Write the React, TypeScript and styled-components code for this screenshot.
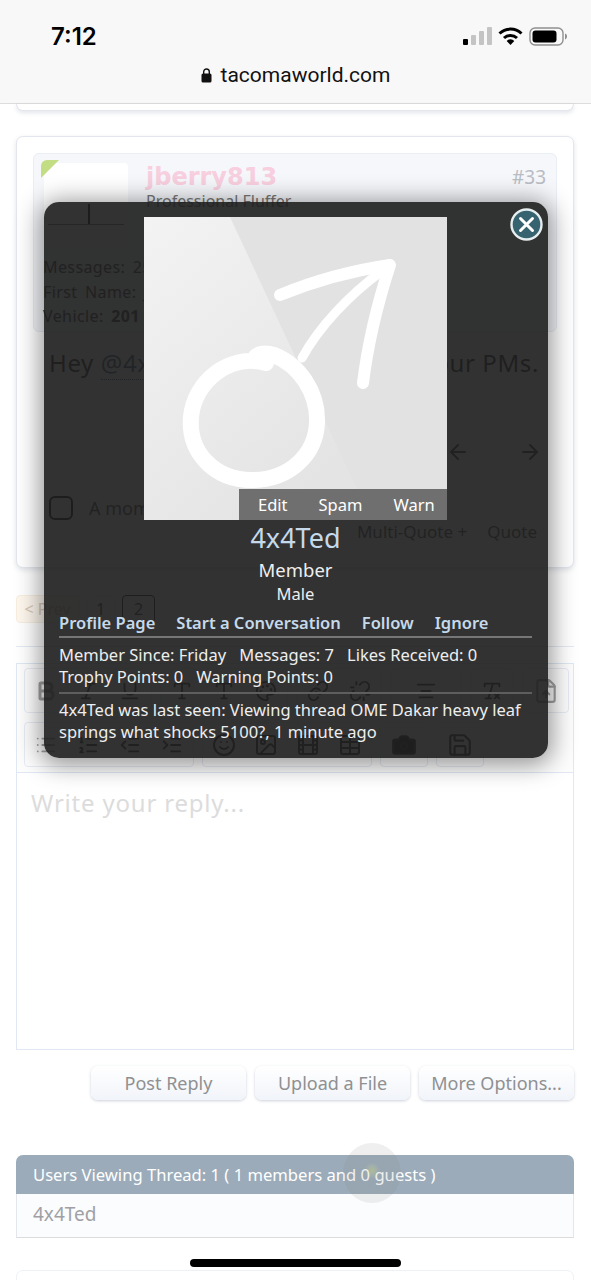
import React from 'react'
import styled, { createGlobalStyle } from 'styled-components'
import {
  AlignCenter, Bold, Camera, Film, FileUp, Image, Indent, Italic, Link, List, ListOrdered,
  Outdent, Palette, RemoveFormatting, Save, Smile, Table, Type, Underline, Unlink, ArrowLeft, ArrowRight
} from 'lucide-react'

const GlobalStyle = createGlobalStyle`
  html, body { margin: 0; padding: 0; background: #fff; }
  body { font-family: "Noto Sans", "Open Sans", sans-serif; }
  * { box-sizing: border-box; }
`

const Page = styled.div`
  position: relative;
  width: 591px;
  height: 1280px;
  overflow: hidden;
  background: #fff;
`

const BrowserBar = styled.header`
  height: 104px;
  background: #f8f8f8;
  border-bottom: 1px solid #dcdcdc;
  display: flex;
  flex-direction: column;
  padding: 21px 24px 0 51px;
`

const StatusRow = styled.div`
  display: flex;
  justify-content: space-between;
  align-items: center;
  height: 30px;
  color: #000;
`

const Clock = styled.span`
  font-family: Inter, Roboto, sans-serif;
  font-size: 24px;
  font-weight: 600;
`

const StatusIcons = styled.div`
  display: flex;
  align-items: center;
  gap: 6px;
`

const UrlRow = styled.div`
  display: flex;
  justify-content: center;
  align-items: center;
  gap: 9px;
  margin: 8px -24px 0 -51px;
  height: 32px;
  font-family: Roboto, Inter, sans-serif;
  font-size: 21px;
  color: #111;
`

const Content = styled.main`
  padding: 0 17px 0 16px;
`

const CardTail = styled.div`
  height: 7px;
  background: #fff;
  border: 1px solid #e4e6ee;
  border-top: 0;
  border-radius: 0 0 8px 8px;
  box-shadow: 0 2px 4px rgba(90, 100, 130, 0.16);
  margin-bottom: 25px;
`

const PostCard = styled.article`
  height: 432px;
  padding: 16px 16px 0 16px;
  background: #fff;
  border: 1px solid #e3e6ee;
  border-radius: 7px;
  box-shadow: 0 2px 5px rgba(90, 100, 130, 0.18);
  display: flex;
  flex-direction: column;
`

const UserBox = styled.section`
  height: 179px;
  padding: 9px 10px 9px 10px;
  background: #f5f7fb;
  border: 1px solid #e9edf5;
  border-radius: 6px;
  flex: none;
`

const UserTop = styled.div`
  display: flex;
  gap: 18px;
`

const Avatar = styled.div`
  position: relative;
  width: 84px;
  height: 84px;
  background: #fff;
  border-radius: 4px;
  flex: none;
  display: flex;
  flex-direction: column;
  align-items: center;
  justify-content: flex-end;
`

const Ribbon = styled.span`
  position: absolute;
  left: -3px;
  top: -3px;
  width: 0;
  height: 0;
  border-top: 18px solid #c3dd84;
  border-right: 18px solid transparent;
  border-top-left-radius: 6px;
`

const AvatarStub = styled.span`
  width: 2px;
  height: 20px;
  margin-left: 6px;
  background: #111;
`

const AvatarRule = styled.span`
  width: 76px;
  height: 1px;
  margin-bottom: 22px;
  background: #777;
`

const UserMeta = styled.div`
  flex: 1;
  display: flex;
  flex-direction: column;
`

const NameRow = styled.div`
  display: flex;
  justify-content: space-between;
  align-items: center;
  height: 28px;
`

const UserName = styled.span`
  font-family: "DejaVu Sans", sans-serif;
  font-size: 24px;
  font-weight: 700;
  color: #f8cfde;
`

const PostNumber = styled.span`
  font-size: 19px;
  color: #b9bdc4;
`

const UserTitle = styled.span`
  font-size: 16px;
  line-height: 20px;
  color: #777;
`

const StatLine = styled.div`
  font-size: 16px;
  line-height: 24.5px;
  letter-spacing: 0.4px;
  word-spacing: 3px;
  color: #444;
  b { font-weight: 700; }
`

const StatList = styled.div`
  margin-top: 8px;
  margin-left: -1px;
`

const MessageText = styled.div`
  display: flex;
  justify-content: space-between;
  padding: 14px 18px 0 16px;
  font-size: 24px;
  letter-spacing: 0.6px;
  line-height: 34px;
  color: #333;
`

const Mention = styled.span`
  color: #49667c;
  border-bottom: 1px dotted #49667c;
`

const PostArrows = styled.div`
  display: flex;
  justify-content: flex-end;
  gap: 48px;
  padding: 60px 15px 0 0;
  color: #444;
`

const CheckRow = styled.div`
  display: flex;
  align-items: center;
  gap: 16px;
  margin: 32px 0 0 16px;
  font-size: 18px;
  color: #555;
`

const CheckBox = styled.span`
  width: 24px;
  height: 24px;
  border: 2px solid #1e1e1e;
  border-radius: 6px;
`

const QuoteRow = styled.div`
  display: flex;
  justify-content: flex-end;
  gap: 20px;
  padding-right: 20px;
  font-size: 17px;
  color: #555;
`

const Pager = styled.nav`
  display: flex;
  gap: 7px;
  margin-top: 27px;
  height: 28px;
`

const PageLink = styled.span<{ $tone?: 'prev' | 'current'; $w: number }>`
  display: flex;
  align-items: center;
  justify-content: center;
  width: ${p => p.$w}px;
  border-radius: 4px;
  font-size: 16px;
  color: ${p => (p.$tone === 'prev' ? '#d8c8b5' : '#444')};
  background: ${p => (p.$tone === 'prev' ? '#fdf7ee' : '#fff')};
  border: 1px solid ${p => (p.$tone === 'current' ? '#222' : p.$tone === 'prev' ? '#f7eedf' : '#f0f0f0')};
`

const Divider = styled.hr`
  margin: 23px 0 16px;
  border: 0;
  border-top: 1px solid #e3eaf3;
`

const Editor = styled.section`
  height: 387px;
  border: 1px solid #dfe8f3;
  display: flex;
  flex-direction: column;
`

const Toolbar = styled.div`
  height: 109px;
  padding: 4px 7px 0;
  display: flex;
  flex-direction: column;
  gap: 9px;
  border-bottom: 1px solid #dfe8f3;
  background: #fdfdfe;
`

const ToolRow = styled.div`
  display: flex;
  gap: 8px;
`

const ToolGroup = styled.div`
  display: flex;
  height: 45px;
  border: 1px solid #e6ebf3;
  border-radius: 4px;
`

const ToolButton = styled.span<{ $w?: number; $light?: boolean }>`
  width: ${p => p.$w ?? 42}px;
  display: flex;
  align-items: center;
  justify-content: center;
  color: ${p => (p.$light ? '#a2a2a2' : '#3c3c3c')};
`

const ReplyArea = styled.div`
  flex: 1;
  padding: 13px 14px;
  font-size: 24px;
  letter-spacing: 0.8px;
  color: #dcdcdc;
`

const ButtonRow = styled.div`
  display: flex;
  justify-content: flex-end;
  gap: 9px;
  margin-top: 16px;
`

const ActionButton = styled.span`
  width: 155px;
  height: 34px;
  display: flex;
  align-items: center;
  justify-content: center;
  font-size: 18px;
  color: #8f9092;
  border-radius: 7px;
  background: linear-gradient(#fff, #f1f4fa);
  box-shadow: 0 1px 3px rgba(90, 100, 130, 0.3);
`

const ViewersBox = styled.section`
  margin-top: 55px;
  height: 83px;
  border: 1px solid #e3e6ea;
  border-top: 0;
  border-bottom-color: #dcdcdc;
  border-radius: 7px 7px 0 0;
`

const ViewersHead = styled.div`
  height: 39px;
  margin: 0 -1px;
  padding: 0 17px;
  display: flex;
  align-items: center;
  font-size: 16.6px;
  color: #fff;
  background: #9babb9;
  border-radius: 7px 7px 0 0;
`

const ViewersBody = styled.div`
  height: 43px;
  padding: 0 16px 4px;
  display: flex;
  align-items: center;
  font-size: 19px;
  color: #a0a0a4;
  background: #fbfcfe;
`

const NextCard = styled.div`
  margin-top: 32px;
  height: 40px;
  border: 1px solid #eef1f6;
  border-radius: 7px;
`

const TouchRing = styled.span`
  position: absolute;
  left: 343px;
  top: 1143px;
  width: 58px;
  height: 60px;
  border-radius: 50%;
  background: radial-gradient(circle at 50% 46%, rgba(190, 200, 120, 0.5) 0, rgba(190, 200, 120, 0.25) 4px, rgba(130, 130, 130, 0.13) 8px);
`

const HomeBar = styled.span`
  position: absolute;
  left: 190px;
  top: 1259px;
  width: 211px;
  height: 8px;
  border-radius: 4px;
  background: #000;
`

const Overlay = styled.aside`
  position: absolute;
  left: 44px;
  top: 202px;
  width: 504px;
  height: 556px;
  padding: 15px 16px 0 15px;
  border-radius: 15px;
  background: rgba(30, 30, 30, 0.91);
  box-shadow: 0 3px 24px 4px rgba(0, 0, 0, 0.42);
  color: #eee;
  display: flex;
  flex-direction: column;
  align-items: stretch;
`

const CloseButton = styled.span`
  position: absolute;
  right: 5px;
  top: 6px;
  width: 33px;
  height: 33px;
`

const PhotoFrame = styled.div`
  position: relative;
  align-self: center;
  width: 303px;
  height: 303px;
  flex: none;
  svg { display: block; }
`

const PhotoActions = styled.div`
  position: absolute;
  right: 0;
  bottom: 0;
  width: 208px;
  height: 31px;
  padding-left: 19px;
  display: flex;
  gap: 31px;
  align-items: center;
  background: #6f6f6f;
  font-size: 16.5px;
  color: #fff;
`

const ProfileName = styled.div`
  margin-top: 1px;
  text-align: center;
  font-size: 27px;
  line-height: 34px;
  color: #c6d9ea;
`

const ProfileRank = styled.div`
  text-align: center;
  font-size: 18.5px;
  line-height: 30px;
`

const ProfileGender = styled.div`
  text-align: center;
  font-size: 16.5px;
  line-height: 17px;
`

const ProfileLinks = styled.div`
  display: flex;
  gap: 21px;
  margin: 8px 0 6px;
  height: 28px;
  padding-bottom: 2px;
  align-items: center;
  border-bottom: 2px solid #767676;
  font-size: 16.5px;
  font-weight: 600;
  color: #c6d9ea;
`

const ProfileStats = styled.div`
  display: flex;
  flex-wrap: wrap;
  column-gap: 13px;
  font-size: 16.5px;
  line-height: 22px;
  padding-bottom: 4px;
  border-bottom: 2px solid #5e5e5e;
  margin-bottom: 5px;
`

const LastSeen = styled.div`
  font-size: 16.5px;
  line-height: 22px;
`

const StatBreak = styled.span`
  flex-basis: 100%;
  height: 0;
`

function SignalIcon() {
  return (
    <svg width="29" height="18" viewBox="0 0 29 18">
      <rect x="0" y="12" width="5" height="6" rx="1" fill="#000" />
      <rect x="8" y="8" width="5" height="10" rx="1" fill="#c4c4c4" />
      <rect x="16" y="4" width="5" height="14" rx="1" fill="#c4c4c4" />
      <rect x="24" y="0" width="5" height="18" rx="1" fill="#c4c4c4" />
    </svg>
  )
}

function WifiIcon() {
  return (
    <svg width="25" height="18" viewBox="0 0 25 18" fill="none" stroke="#000" strokeWidth="3">
      <path d="M1.5 6.5a16 16 0 0 1 22 0" />
      <path d="M6 11a9.5 9.5 0 0 1 13 0" />
      <path d="M12.5 18l-3.8-4a5 5 0 0 1 7.6 0z" fill="#000" stroke="none" />
    </svg>
  )
}

function BatteryIcon() {
  return (
    <svg width="38" height="19" viewBox="0 0 38 19">
      <rect x="1" y="1" width="33" height="17" rx="5" fill="none" stroke="#8f8f8f" strokeWidth="1.4" />
      <rect x="3.5" y="3.5" width="24" height="12" rx="3" fill="#000" />
      <path d="M36 6.5c1.3.4 2 1.6 2 3s-.7 2.6-2 3z" fill="#8f8f8f" />
    </svg>
  )
}

function LockIcon() {
  return (
    <svg width="11" height="15" viewBox="0 0 11 15">
      <rect x="0.5" y="5.5" width="10" height="9" rx="1.5" fill="#111" />
      <path d="M2.7 6V3.8a2.8 2.8 0 0 1 5.6 0V6" fill="none" stroke="#111" strokeWidth="1.4" />
    </svg>
  )
}

function MarsPhoto() {
  return (
    <svg width="303" height="303" viewBox="0 0 303 303">
      <defs>
        <linearGradient id="wedge" x1="0" y1="0" x2="0.6" y2="1">
          <stop offset="0" stopColor="#f3f3f3" />
          <stop offset="1" stopColor="#e4e4e4" />
        </linearGradient>
      </defs>
      <rect width="303" height="303" fill="#e2e2e2" />
      <path d="M0 0H86L212 270V303H0z" fill="url(#wedge)" />
      <g fill="none" stroke="#fff" strokeLinecap="round" strokeLinejoin="round">
        <path
          d="M122 146C85 136 50 165 47 200C44 235 70 263 108 263C145 263 172 238 173 205C174 175 155 148 130 138C120 135 112 137 110 143"
          strokeWidth="16"
        />
        <path d="M158 141C175 110 205 78 238 54" strokeWidth="9" />
        <path d="M136 78C170 64 205 54 246 48C234 85 224 125 219 166" strokeWidth="12" />
      </g>
    </svg>
  )
}

const App: React.FC = () => (
  <Page>
    <GlobalStyle />
    <BrowserBar>
      <StatusRow>
        <Clock>7:12</Clock>
        <StatusIcons>
          <SignalIcon />
          <WifiIcon />
          <BatteryIcon />
        </StatusIcons>
      </StatusRow>
      <UrlRow>
        <LockIcon />
        <span>tacomaworld.com</span>
      </UrlRow>
    </BrowserBar>
    <Content>
      <CardTail />
      <PostCard>
        <UserBox>
          <UserTop>
            <Avatar>
              <Ribbon />
              <AvatarStub />
              <AvatarRule />
            </Avatar>
            <UserMeta>
              <NameRow>
                <UserName>jberry813</UserName>
                <PostNumber>#33</PostNumber>
              </NameRow>
              <UserTitle>Professional Fluffer</UserTitle>
            </UserMeta>
          </UserTop>
          <StatList>
            <StatLine>Messages: 25</StatLine>
            <StatLine>First Name: J</StatLine>
            <StatLine>Vehicle: <b>201</b></StatLine>
          </StatList>
        </UserBox>
        <MessageText>
          <span>Hey <Mention>@4x4Ted</Mention></span>
          <span>check your PMs.</span>
        </MessageText>
        <PostArrows>
          <ArrowLeft size={24} />
          <ArrowRight size={24} />
        </PostArrows>
        <CheckRow>
          <CheckBox />
          <span>A moment ago</span>
        </CheckRow>
        <QuoteRow>
          <span>Multi-Quote +</span>
          <span>Quote</span>
        </QuoteRow>
      </PostCard>
      <Pager>
        <PageLink $tone="prev" $w={63}>&lt; Prev</PageLink>
        <PageLink $w={29}>1</PageLink>
        <PageLink $tone="current" $w={33}>2</PageLink>
      </Pager>
      <Divider />
      <Editor>
        <Toolbar>
          <ToolRow>
            <ToolGroup>
              <ToolButton $light><Bold size={24} strokeWidth={3} /></ToolButton>
              <ToolButton><Italic size={22} /></ToolButton>
              <ToolButton><Underline size={22} /></ToolButton>
            </ToolGroup>
            <ToolGroup>
              <ToolButton><Type size={22} /></ToolButton>
              <ToolButton><Type size={22} /></ToolButton>
              <ToolButton><Palette size={22} /></ToolButton>
            </ToolGroup>
            <ToolGroup>
              <ToolButton><Link size={22} /></ToolButton>
              <ToolButton><Unlink size={22} /></ToolButton>
            </ToolGroup>
            <ToolGroup>
              <ToolButton $w={70}><AlignCenter size={22} /></ToolButton>
            </ToolGroup>
            <ToolGroup>
              <ToolButton><RemoveFormatting size={22} /></ToolButton>
            </ToolGroup>
            <ToolGroup>
              <ToolButton $light $w={45}><FileUp size={26} /></ToolButton>
            </ToolGroup>
          </ToolRow>
          <ToolRow>
            <ToolGroup>
              <ToolButton $light><List size={22} /></ToolButton>
              <ToolButton><ListOrdered size={22} /></ToolButton>
              <ToolButton><Outdent size={22} /></ToolButton>
              <ToolButton><Indent size={22} /></ToolButton>
            </ToolGroup>
            <ToolGroup>
              <ToolButton><Smile size={24} /></ToolButton>
              <ToolButton><Image size={24} /></ToolButton>
              <ToolButton><Film size={24} /></ToolButton>
              <ToolButton><Table size={24} /></ToolButton>
            </ToolGroup>
            <ToolGroup>
              <ToolButton $w={46}><Camera size={26} fill="#2a2a2a" /></ToolButton>
            </ToolGroup>
            <ToolGroup>
              <ToolButton $w={46}><Save size={26} /></ToolButton>
            </ToolGroup>
          </ToolRow>
        </Toolbar>
        <ReplyArea>Write your reply...</ReplyArea>
      </Editor>
      <ButtonRow>
        <ActionButton>Post Reply</ActionButton>
        <ActionButton>Upload a File</ActionButton>
        <ActionButton>More Options...</ActionButton>
      </ButtonRow>
      <ViewersBox>
        <ViewersHead>Users Viewing Thread: 1 ( 1 members and 0 guests )</ViewersHead>
        <ViewersBody>4x4Ted</ViewersBody>
      </ViewersBox>
      <NextCard />
    </Content>
    <TouchRing />
    <HomeBar />
    <Overlay>
      <CloseButton>
        <svg width="33" height="33" viewBox="0 0 33 33">
          <circle cx="16.5" cy="16.5" r="15" fill="#37626f" stroke="#e6eef0" strokeWidth="2.4" />
          <path d="M10.5 10.5l12 12M22.5 10.5l-12 12" stroke="#fff" strokeWidth="3" strokeLinecap="round" />
        </svg>
      </CloseButton>
      <PhotoFrame>
        <MarsPhoto />
        <PhotoActions>
          <span>Edit</span>
          <span>Spam</span>
          <span>Warn</span>
        </PhotoActions>
      </PhotoFrame>
      <ProfileName>4x4Ted</ProfileName>
      <ProfileRank>Member</ProfileRank>
      <ProfileGender>Male</ProfileGender>
      <ProfileLinks>
        <span>Profile Page</span>
        <span>Start a Conversation</span>
        <span>Follow</span>
        <span>Ignore</span>
      </ProfileLinks>
      <ProfileStats>
        <span>Member Since: Friday</span>
        <span>Messages: 7</span>
        <span>Likes Received: 0</span>
        <StatBreak />
        <span>Trophy Points: 0</span>
        <span>Warning Points: 0</span>
      </ProfileStats>
      <LastSeen>4x4Ted was last seen: Viewing thread OME Dakar heavy leaf springs what shocks 5100?, 1 minute ago</LastSeen>
    </Overlay>
  </Page>
)

export default App
